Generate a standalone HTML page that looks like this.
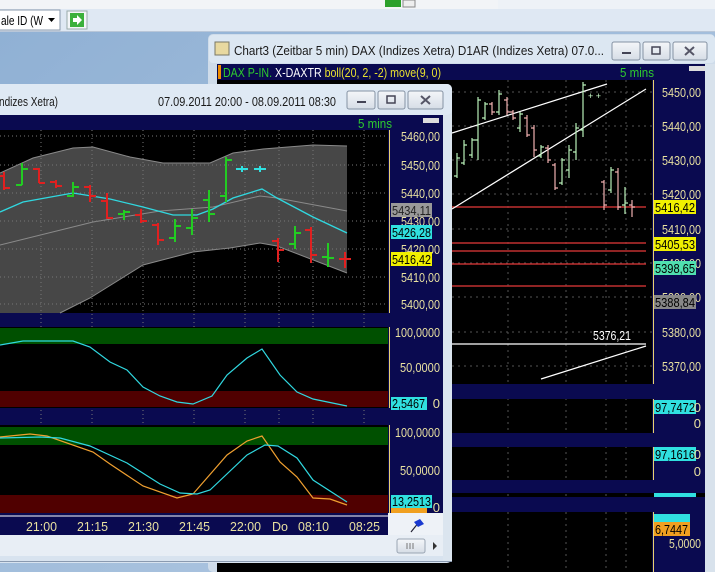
<!DOCTYPE html>
<html><head><meta charset="utf-8"><style>
html,body{margin:0;padding:0;width:715px;height:572px;overflow:hidden;background:#a3bcd9}
svg{display:block}
text{font-family:"Liberation Sans",sans-serif}
</style></head><body>
<svg width="715" height="572" viewBox="0 0 715 572" xmlns="http://www.w3.org/2000/svg">
<defs>
<linearGradient id="desk" x1="0" y1="0" x2="1" y2="1"><stop offset="0" stop-color="#8fb0d4"/><stop offset="1" stop-color="#b5cbe3"/></linearGradient>
<linearGradient id="btn" x1="0" y1="0" x2="0" y2="1"><stop offset="0" stop-color="#f4f6f9"/><stop offset="1" stop-color="#d6dde6"/></linearGradient>
</defs>
<rect width="715" height="572" fill="url(#desk)"/>
<rect x="0" y="0" width="715" height="9" fill="#eef2f7"/>
<rect x="0" y="0" width="498" height="9" fill="#f2f4f7"/>
<rect x="385" y="0" width="16" height="7" fill="#2ca02c"/><rect x="403" y="0" width="12" height="7" fill="#eee" stroke="#888"/>
<rect x="0" y="9" width="715" height="23" fill="#dfe8f3"/>
<line x1="0" y1="31.5" x2="715" y2="31.5" stroke="#b8c6d8"/>
<rect x="-2" y="10" width="62" height="20" fill="#fff" stroke="#8a99ab"/>
<text x="1" y="25" font-size="13" fill="#000" textLength="42" lengthAdjust="spacingAndGlyphs">ale ID (W</text>
<path d="M48 18 l7 0 l-3.5 4 z" fill="#000"/>
<rect x="67" y="11" width="20" height="18" fill="#f3f5f8" stroke="#9aa"/>
<rect x="70" y="13" width="14" height="14" fill="#3bb03b"/>
<path d="M73 18h4v-3l5 5-5 5v-3h-4z" fill="#fff"/>

<!-- Right window -->
<rect x="208" y="34" width="507" height="538" fill="#cfdcea" rx="5"/>
<rect x="209" y="35" width="506" height="28" fill="#dce7f2" rx="4"/>
<rect x="215" y="42" width="14" height="13" fill="#e8d9a0" stroke="#776"/>
<text x="234" y="55" font-size="13" fill="#1a1a1a" textLength="370" lengthAdjust="spacingAndGlyphs">Chart3 (Zeitbar 5 min)  DAX (Indizes Xetra) D1AR (Indizes Xetra) 07.0...</text>
<rect x="612" y="42" width="28" height="18" rx="2" fill="url(#btn)" stroke="#8592a3"/>
<rect x="622" y="52" width="9" height="2" fill="#445"/>
<rect x="643" y="42" width="27" height="18" rx="2" fill="url(#btn)" stroke="#8592a3"/>
<rect x="652" y="47" width="8" height="7" fill="none" stroke="#445" stroke-width="1.5"/>
<rect x="673" y="42" width="34" height="18" rx="2" fill="url(#btn)" stroke="#8592a3"/>
<path d="M685 47l9 8M694 47l-9 8" stroke="#556" stroke-width="2"/>
<rect x="217" y="64" width="488" height="508" fill="#000"/>
<rect x="217" y="64" width="488" height="16" fill="#0a0a50"/>
<rect x="218" y="65" width="3" height="14" fill="#f08c00"/>
<text x="223" y="77" font-size="13" textLength="218" lengthAdjust="spacingAndGlyphs"><tspan fill="#2ecc2e">DAX P-IN.</tspan><tspan fill="#fff"> X-DAXTR </tspan><tspan fill="#e8e030">boll(20, 2, -2) move(9, 0)</tspan></text>
<text x="620" y="77" font-size="13" fill="#2ecc2e" textLength="34" lengthAdjust="spacingAndGlyphs">5 mins</text>
<rect x="689" y="66" width="16" height="5" fill="#ddd"/>
<rect x="652" y="80" width="53" height="304" fill="#0a0a50"/>
<line x1="653.5" y1="80" x2="653.5" y2="384" stroke="#e8d070"/>
<rect x="705" y="64" width="10" height="508" fill="#d8e2ec"/>
<g stroke="#555" stroke-dasharray="2,4">
<line x1="452" y1="92" x2="652" y2="92"/><line x1="452" y1="126" x2="652" y2="126"/><line x1="452" y1="160" x2="652" y2="160"/><line x1="452" y1="194" x2="652" y2="194"/><line x1="452" y1="229" x2="652" y2="229"/><line x1="452" y1="263" x2="652" y2="263"/><line x1="452" y1="297" x2="652" y2="297"/><line x1="452" y1="332" x2="652" y2="332"/><line x1="452" y1="366" x2="652" y2="366"/>
<line x1="508" y1="80" x2="508" y2="572"/><line x1="566" y1="80" x2="566" y2="572"/><line x1="606" y1="80" x2="606" y2="572"/><line x1="626" y1="80" x2="626" y2="572"/>
</g>
<g fill="#e8e0a0" font-size="13">
<text x="662" y="97" textLength="39" lengthAdjust="spacingAndGlyphs">5450,00</text><text x="662" y="131" textLength="39" lengthAdjust="spacingAndGlyphs">5440,00</text><text x="662" y="165" textLength="39" lengthAdjust="spacingAndGlyphs">5430,00</text><text x="662" y="199" textLength="39" lengthAdjust="spacingAndGlyphs">5420,00</text><text x="662" y="234" textLength="39" lengthAdjust="spacingAndGlyphs">5410,00</text><text x="662" y="268" textLength="39" lengthAdjust="spacingAndGlyphs">5400,00</text><text x="662" y="302" textLength="39" lengthAdjust="spacingAndGlyphs">5390,00</text><text x="662" y="337" textLength="39" lengthAdjust="spacingAndGlyphs">5380,00</text><text x="662" y="371" textLength="39" lengthAdjust="spacingAndGlyphs">5370,00</text>
</g>
<g stroke="#c03030" stroke-width="1.5">
<line x1="452" y1="207" x2="646" y2="207"/><line x1="452" y1="243" x2="646" y2="243"/><line x1="452" y1="251" x2="646" y2="251"/><line x1="452" y1="264" x2="646" y2="264"/><line x1="452" y1="286" x2="646" y2="286"/>
</g>
<g stroke="#fff" stroke-width="1.2">
<line x1="452" y1="133" x2="607" y2="84"/><line x1="452" y1="209" x2="646" y2="89"/>
<line x1="452" y1="344" x2="646" y2="344"/><line x1="541" y1="379" x2="646" y2="346"/>
</g>
<text x="593" y="340" font-size="13" fill="#fff" textLength="38" lengthAdjust="spacingAndGlyphs">5376,21</text>
<g stroke-width="1.2">
<path stroke="#b8f0b8" d="M457 153v25M454 176h3M457 158h3 M464 140v25M461 163h3M464 145h3 M472 138v20M469 155h3M472 140h3 M478 97v63M475 140h3M478 100h3 M485 102v18M482 118h3M485 104h3 M499 90v25M496 112h3M499 94h3 M520 112v20M517 128h3M520 114h3 M541 145v13M538 156h3M541 147h3 M562 158v27M559 183h3M562 160h3 M569 145v33M566 170h3M569 150h3 M576 123v37M573 152h3M576 128h3 M583 82v55M580 130h3M583 85h3 M611 167v26M608 190h3M611 170h3 M625 187v27M622 205h3M625 203h3"/>
<path stroke="#f0b0b0" d="M492 102v13M489 104h3M492 112h3 M507 97v18M504 100h3M507 112h3 M513 110v10M510 112h3M513 118h3 M527 115v22M524 118h3M527 135h3 M534 125v32M531 128h3M534 150h3 M548 145v18M545 148h3M548 160h3 M555 163v27M552 165h3M555 188h3 M604 180v30M601 182h3M604 205h3 M618 168v42M615 172h3M618 207h3 M632 200v17M629 205h3M632 207h3"/>
</g>
<text x="588" y="99" font-size="9" fill="#cfc">+ +</text>
<rect x="654" y="200" width="42" height="14" fill="#f0f000"/><text x="655" y="212" font-size="13" fill="#000" textLength="40" lengthAdjust="spacingAndGlyphs">5416,42</text>
<rect x="654" y="237" width="42" height="14" fill="#f0f000"/><text x="655" y="249" font-size="13" fill="#000" textLength="40" lengthAdjust="spacingAndGlyphs">5405,53</text>
<rect x="654" y="261" width="42" height="14" fill="#50e0b0"/><text x="655" y="273" font-size="13" fill="#000" textLength="40" lengthAdjust="spacingAndGlyphs">5398,65</text>
<rect x="654" y="295" width="42" height="14" fill="#888"/><text x="655" y="307" font-size="13" fill="#000" textLength="40" lengthAdjust="spacingAndGlyphs">5388,84</text>
<rect x="452" y="384" width="253" height="15" fill="#0a0a50"/>
<rect x="652" y="399" width="53" height="34" fill="#0a0a50"/><line x1="653.5" y1="399" x2="653.5" y2="433" stroke="#e8d070"/>
<rect x="452" y="433" width="253" height="14" fill="#0a0a50"/>
<rect x="652" y="447" width="53" height="33" fill="#0a0a50"/><line x1="653.5" y1="447" x2="653.5" y2="480" stroke="#e8d070"/>
<rect x="452" y="480" width="253" height="13" fill="#0a0a50"/>
<rect x="452" y="497" width="253" height="15" fill="#0a0a50"/>
<rect x="652" y="512" width="53" height="60" fill="#0a0a50"/><line x1="653.5" y1="512" x2="653.5" y2="572" stroke="#e8d070"/>
<rect x="654" y="400" width="42" height="14" fill="#30e0e0"/><text x="655" y="412" font-size="13" fill="#000" textLength="40" lengthAdjust="spacingAndGlyphs">97,7472</text><text x="701" y="412" font-size="13" fill="#e8e0a0" text-anchor="end">0</text>
<text x="701" y="428" font-size="13" fill="#e8e0a0" text-anchor="end">0</text>
<rect x="654" y="447" width="42" height="14" fill="#30e0e0"/><text x="655" y="459" font-size="13" fill="#000" textLength="40" lengthAdjust="spacingAndGlyphs">97,1616</text><text x="701" y="459" font-size="13" fill="#e8e0a0" text-anchor="end">0</text>
<text x="701" y="476" font-size="13" fill="#e8e0a0" text-anchor="end">0</text>
<rect x="654" y="493" width="42" height="4" fill="#30e0e0"/>
<rect x="654" y="514" width="36" height="10" fill="#30e0e0"/>
<rect x="654" y="522" width="36" height="14" fill="#f0a020"/><text x="655" y="534" font-size="13" fill="#000" textLength="33" lengthAdjust="spacingAndGlyphs">6,7447</text>
<text x="669" y="548" font-size="13" fill="#e8e0a0" textLength="32" lengthAdjust="spacingAndGlyphs">5,0000</text>

<!-- Left window -->
<rect x="-6" y="84" width="458" height="479" fill="#d8e3ef" rx="5"/>
<rect x="-6" y="84" width="458" height="31" fill="#dfe9f4" rx="5"/>
<text x="-1" y="106" font-size="13" fill="#1a1a1a" textLength="59" lengthAdjust="spacingAndGlyphs">ndizes Xetra)</text>
<text x="158" y="106" font-size="13" fill="#1a1a1a" textLength="178" lengthAdjust="spacingAndGlyphs">07.09.2011 20:00 - 08.09.2011 08:30</text>
<rect x="347" y="91" width="28" height="18" rx="2" fill="url(#btn)" stroke="#8592a3"/>
<rect x="357" y="101" width="9" height="2" fill="#445"/>
<rect x="378" y="91" width="27" height="18" rx="2" fill="url(#btn)" stroke="#8592a3"/>
<rect x="387" y="96" width="8" height="7" fill="none" stroke="#445" stroke-width="1.5"/>
<rect x="408" y="91" width="35" height="18" rx="2" fill="url(#btn)" stroke="#8592a3"/>
<path d="M421 96l9 8M430 96l-9 8" stroke="#556" stroke-width="2"/>
<rect x="0" y="115" width="443" height="420" fill="#0a0a50"/>
<text x="358" y="128" font-size="13" fill="#2ecc2e" textLength="34" lengthAdjust="spacingAndGlyphs">5 mins</text>
<rect x="423" y="118" width="16" height="5" fill="#ddd"/>
<rect x="0" y="130" width="388" height="183" fill="#000"/>
<line x1="389.5" y1="130" x2="389.5" y2="313" stroke="#e8d070"/>
<path d="M0 173 L33 158 L73 148 L93 147 L130 157 L163 163 L210 163 L233 153 L263 149 L313 145 L347 146 L347 273 L277 246 L260 243 L230 248 L193 252 L143 265 L90 298 L60 313 L0 313 Z" fill="#474747"/>
<path d="M0 173 L33 158 L73 148 L93 147 L130 157 L163 163 L210 163 L233 153 L263 149 L313 145 L347 146" fill="none" stroke="#8a8a8a"/>
<path d="M60 313 L90 298 L143 265 L193 252 L230 248 L260 243 L277 246 L347 273" fill="none" stroke="#8a8a8a"/>
<path d="M0 245 L93 222 L160 211 L213 207 L260 196 L277 198 L347 211" fill="none" stroke="#8a8a8a"/>
<g stroke="#777" stroke-dasharray="1,3">
<line x1="0" y1="136" x2="388" y2="136"/><line x1="0" y1="165" x2="388" y2="165"/><line x1="0" y1="193" x2="388" y2="193"/><line x1="0" y1="221" x2="388" y2="221"/><line x1="0" y1="249" x2="388" y2="249"/><line x1="0" y1="277" x2="388" y2="277"/><line x1="0" y1="304" x2="388" y2="304"/>
<line x1="41" y1="130" x2="41" y2="513"/><line x1="92" y1="130" x2="92" y2="513"/><line x1="143" y1="130" x2="143" y2="513"/><line x1="194" y1="130" x2="194" y2="513"/><line x1="245" y1="130" x2="245" y2="513"/><line x1="279" y1="130" x2="279" y2="513"/><line x1="313" y1="130" x2="313" y2="513"/><line x1="364" y1="130" x2="364" y2="513"/>
</g>
<path d="M0 212 L23 202 L73 193 L110 199 L143 207 L173 215 L197 215 L213 209 L233 198 L262 189 L277 198 L313 217 L347 233" fill="none" stroke="#30d8e0" stroke-width="1.3"/>
<g stroke-width="2" fill="none">
<path stroke="#22cc22" d="M22 163v22M16 185h6M22 169h6 M73 182v15M67 196h6M73 187h6 M124 210v10M118 214h6M124 212h6 M175 219v23M169 238h6M175 226h6 M192 209v26M186 228h6M192 218h6 M209 190v32M203 200h6M209 214h6 M226 157v45M220 196h6M226 160h6 M295 226v23M289 244h6M295 233h6 M328 243v24M322 257h6M328 258h6"/>
<path stroke="#e02020" d="M4 172v18M0 176h4M4 188h6 M39 168v15M33 169h6M39 183h6 M56 180v8M50 182h6M56 186h6 M90 185v17M84 187h6M90 196h6 M107 193v26M101 201h6M107 218h6 M141 209v14M135 215h6M141 221h6 M158 223v22M152 225h6M158 240h6 M278 238v24M272 241h6M278 250h6 M311 227v36M305 230h6M311 255h6 M345 252v16M339 259h12"/>
</g>
<path d="M236 169h12M254 169h12M242 166v6M260 166v6" stroke="#30e0e0" stroke-width="2"/>
<g fill="#e8e0a0" font-size="13">
<text x="401" y="141" textLength="39" lengthAdjust="spacingAndGlyphs">5460,00</text><text x="401" y="170" textLength="39" lengthAdjust="spacingAndGlyphs">5450,00</text><text x="401" y="198" textLength="39" lengthAdjust="spacingAndGlyphs">5440,00</text><text x="401" y="226" textLength="39" lengthAdjust="spacingAndGlyphs">5430,00</text><text x="401" y="254" textLength="39" lengthAdjust="spacingAndGlyphs">5420,00</text><text x="401" y="282" textLength="39" lengthAdjust="spacingAndGlyphs">5410,00</text><text x="401" y="309" textLength="39" lengthAdjust="spacingAndGlyphs">5400,00</text>
</g>
<rect x="391" y="203" width="41" height="14" fill="#999"/><text x="392" y="215" font-size="13" fill="#222" textLength="39" lengthAdjust="spacingAndGlyphs">5434,11</text>
<rect x="391" y="225" width="41" height="14" fill="#30e0e0"/><text x="392" y="237" font-size="13" fill="#000" textLength="39" lengthAdjust="spacingAndGlyphs">5426,28</text>
<rect x="391" y="252" width="41" height="14" fill="#f0f000"/><text x="392" y="264" font-size="13" fill="#000" textLength="39" lengthAdjust="spacingAndGlyphs">5416,42</text>
<rect x="0" y="327" width="388" height="81" fill="#000"/>
<rect x="0" y="328" width="388" height="16" fill="#005000"/>
<rect x="0" y="391" width="388" height="16" fill="#500000"/>
<line x1="389.5" y1="327" x2="389.5" y2="408" stroke="#e8d070"/>
<path d="M0 345 L23 341 L73 341 L90 347 L110 362 L127 370 L143 387 L160 396 L177 402 L193 404 L212 396 L227 375 L247 358 L262 349 L280 375 L297 392 L313 399 L347 406" fill="none" stroke="#30d8e0" stroke-width="1.2"/>
<text x="395" y="337" font-size="13" fill="#e8e0a0" textLength="45" lengthAdjust="spacingAndGlyphs">100,0000</text>
<text x="400" y="372" font-size="13" fill="#e8e0a0" textLength="40" lengthAdjust="spacingAndGlyphs">50,0000</text>
<rect x="391" y="397" width="36" height="13" fill="#30e0e0"/><text x="392" y="408" font-size="13" fill="#000" textLength="33" lengthAdjust="spacingAndGlyphs">2,5467</text>
<text x="440" y="408" font-size="13" fill="#e8e0a0" text-anchor="end">0</text>
<rect x="0" y="425" width="388" height="88" fill="#000"/>
<rect x="0" y="427" width="388" height="18" fill="#005000"/>
<rect x="0" y="495" width="388" height="18" fill="#500000"/>
<line x1="389.5" y1="425" x2="389.5" y2="513" stroke="#e8d070"/>
<path d="M0 437 L30 434 L47 436 L93 452 L110 464 L143 486 L177 498 L193 494 L227 455 L247 441 L262 436 L280 462 L297 477 L313 498 L330 499 L347 505" fill="none" stroke="#f0a030" stroke-width="1.2"/>
<path d="M0 438 L40 437 L60 438 L90 446 L127 463 L160 484 L180 493 L197 494 L210 490 L247 455 L265 445 L278 446 L297 458 L313 480 L347 502" fill="none" stroke="#30d8e0" stroke-width="1.2"/>
<text x="395" y="437" font-size="13" fill="#e8e0a0" textLength="45" lengthAdjust="spacingAndGlyphs">100,0000</text>
<text x="400" y="475" font-size="13" fill="#e8e0a0" textLength="40" lengthAdjust="spacingAndGlyphs">50,0000</text>
<rect x="391" y="505" width="36" height="8" fill="#f0a020"/>
<rect x="391" y="495" width="41" height="13" fill="#30e0e0"/><text x="392" y="506" font-size="13" fill="#000" textLength="39" lengthAdjust="spacingAndGlyphs">13,2513</text>
<text x="440" y="512" font-size="13" fill="#e8e0a0" text-anchor="end">0</text>
<line x1="0" y1="516" x2="388" y2="516" stroke="#fff"/>
<g fill="#e8e0a0" font-size="13">
<text x="26" y="531" textLength="31" lengthAdjust="spacingAndGlyphs">21:00</text><text x="77" y="531" textLength="31" lengthAdjust="spacingAndGlyphs">21:15</text><text x="128" y="531" textLength="31" lengthAdjust="spacingAndGlyphs">21:30</text><text x="179" y="531" textLength="31" lengthAdjust="spacingAndGlyphs">21:45</text><text x="230" y="531" textLength="31" lengthAdjust="spacingAndGlyphs">22:00</text><text x="272" y="531" textLength="16" lengthAdjust="spacingAndGlyphs">Do</text><text x="298" y="531" textLength="31" lengthAdjust="spacingAndGlyphs">08:10</text><text x="349" y="531" textLength="31" lengthAdjust="spacingAndGlyphs">08:25</text>
</g>
<rect x="388" y="513" width="55" height="22" fill="#eef2f7"/>
<path d="M411 532l8-10" stroke="#223" stroke-width="1.2"/><path d="M414 522l6-3 4 5-6 3z" fill="#1a3ad0"/>
<rect x="0" y="535" width="443" height="21" fill="#e8eef5"/>
<rect x="397" y="539" width="28" height="14" rx="2" fill="url(#btn)" stroke="#9aa5b3"/>
<path d="M407 543v6M410 543v6M413 543v6" stroke="#777"/>
<path d="M433 542l4 4-4 4z" fill="#333"/>
<rect x="443" y="115" width="9" height="447" fill="#dbe5ef"/>
<line x1="0" y1="561.5" x2="452" y2="561.5" stroke="#8a9ab0"/>
</svg>
</body></html>
